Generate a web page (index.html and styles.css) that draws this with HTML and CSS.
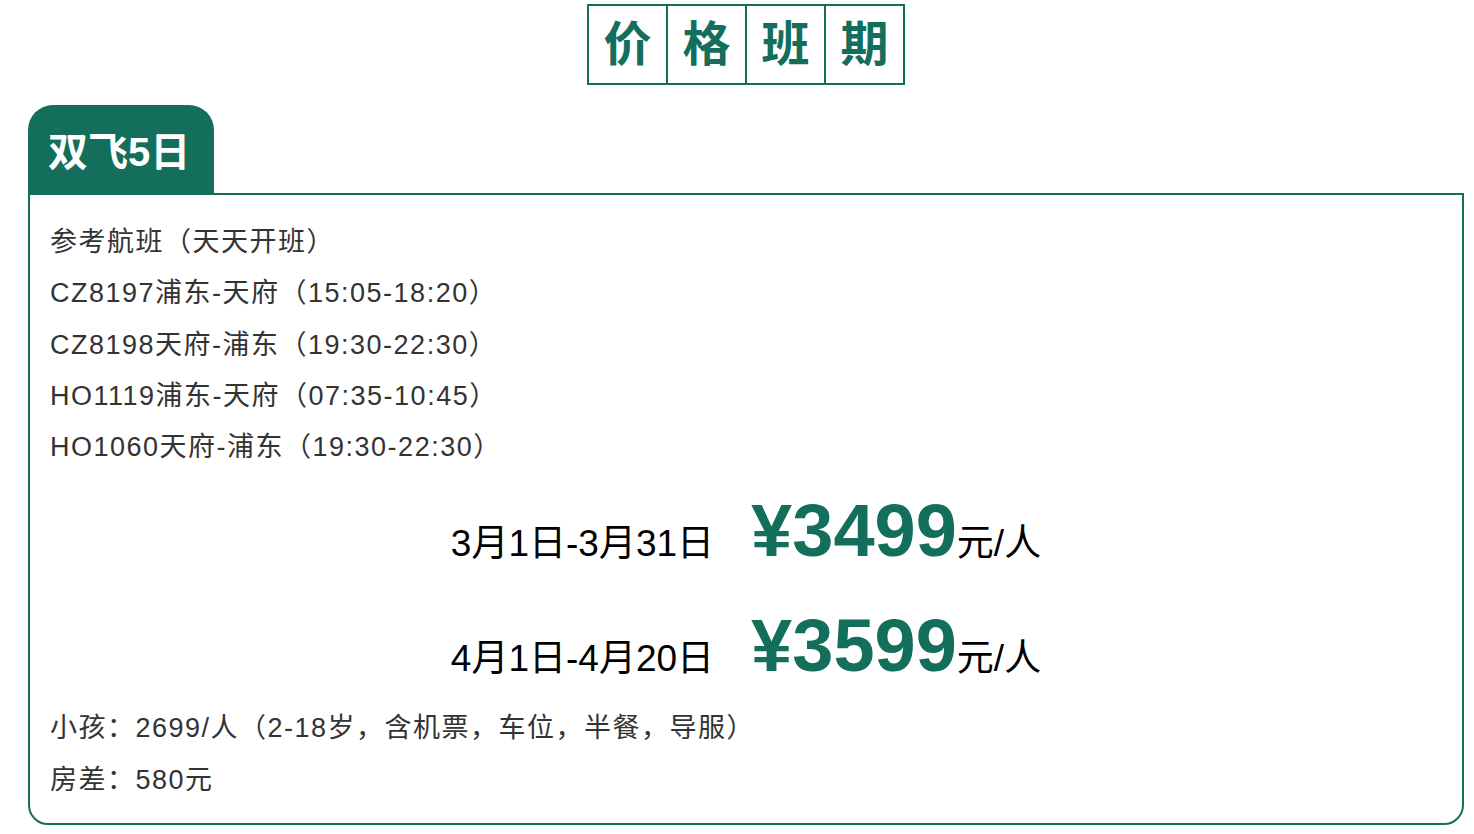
FILE: index.html
```html
<!DOCTYPE html>
<html lang="zh-CN">
<head>
<meta charset="utf-8">
<title>价格班期</title>
<link rel="stylesheet" href="styles.css">
</head>
<body>
<div class="page">
  <div class="title">
    <span class="title-cell">价</span>
    <span class="title-cell">格</span>
    <span class="title-cell">班</span>
    <span class="title-cell">期</span>
  </div>
  <div class="tab">双飞5日</div>
  <div class="box">
    <p class="line">参考航班（天天开班）</p>
    <p class="line">CZ8197浦东-天府（15:05-18:20）</p>
    <p class="line">CZ8198天府-浦东（19:30-22:30）</p>
    <p class="line">HO1119浦东-天府（07:35-10:45）</p>
    <p class="line">HO1060天府-浦东（19:30-22:30）</p>
    <div class="price-row">
      <span class="date">3月1日-3月31日</span>
      <span class="price">¥3499</span><span class="unit">元/人</span>
    </div>
    <div class="price-row">
      <span class="date">4月1日-4月20日</span>
      <span class="price">¥3599</span><span class="unit">元/人</span>
    </div>
    <p class="line">小孩：2699/人（2-18岁，含机票，车位，半餐，导服）</p>
    <p class="line">房差：580元</p>
  </div>
</div>
</body>
</html>
```

FILE: styles.css
```css
html, body {
  margin: 0;
  padding: 0;
  background: #ffffff;
}

body {
  font-family: "Liberation Sans", "Noto Sans CJK SC", sans-serif;
}

.page {
  margin: 4px 10px 0 28px;
  display: flex;
  flex-direction: column;
}

.title {
  align-self: center;
  display: flex;
  border: 2px solid #136e5b;
}

.title-cell {
  width: 77px;
  height: 77px;
  display: flex;
  align-items: center;
  justify-content: center;
  font-size: 48px;
  font-weight: 700;
  line-height: 1;
  color: #136e5b;
}

.title-cell + .title-cell {
  border-left: 2px solid #136e5b;
}

.tab {
  margin-top: 20px;
  align-self: flex-start;
  height: 88px;
  padding: 0 24px 0 20px;
  display: flex;
  align-items: center;
  background: #136e5b;
  color: #ffffff;
  font-size: 40px;
  font-weight: 700;
  border-radius: 25px 25px 0 0;
}

.box {
  border: 2px solid #136e5b;
  border-radius: 0 0 20px 20px;
  padding: 22px 20px 17px 20px;
}

.line {
  margin: 0;
  font-size: 27px;
  line-height: 51.3px;
  letter-spacing: 1.5px;
  color: #333333;
}

.price-row {
  box-sizing: border-box;
  display: flex;
  justify-content: center;
  align-items: baseline;
  height: 115px;
  padding-top: 21px;
}

.date {
  font-size: 37px;
  line-height: 1;
  color: #000000;
  margin-right: 37px;
}

.price {
  font-size: 74px;
  font-weight: 700;
  line-height: 1;
  color: #136e5b;
}

.unit {
  font-size: 37px;
  line-height: 1;
  color: #000000;
}
```
